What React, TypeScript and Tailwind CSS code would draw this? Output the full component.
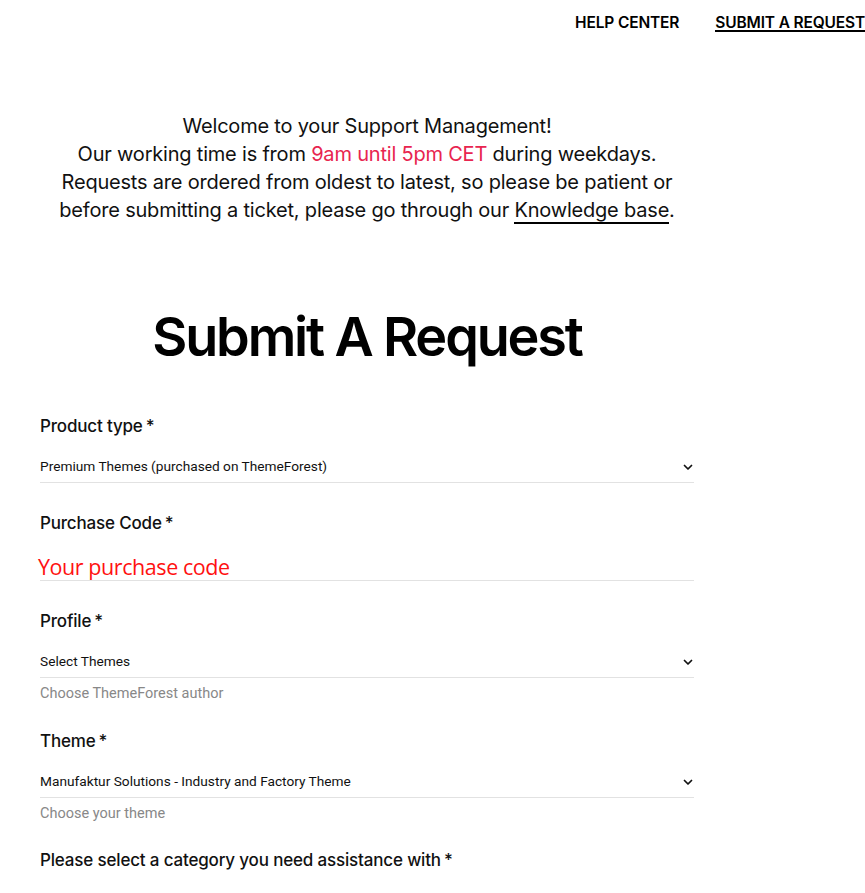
import React from 'react';

const Chevron = () => (
  <svg width="12" height="12" viewBox="0 0 24 24" fill="none" stroke="#111" strokeWidth="3.5" strokeLinecap="round" strokeLinejoin="round">
    <polyline points="5 9 12 16 19 9" />
  </svg>
);

function Label({ children }: { children: React.ReactNode }) {
  return (
    <div className="text-[17px] font-medium text-[#111] leading-6 [font-family:Inter,sans-serif] tracking-[-0.01em]">
      {children}
      <span className="ml-[3px]">*</span>
    </div>
  );
}

function SelectField({ value, help }: { value: string; help?: string }) {
  return (
    <div>
      <div className="mt-[13px] flex items-center justify-between border-b border-[#e2e2e2] h-[32px]">
        <span className="text-[13.7px] text-[#111] [font-family:Roboto,sans-serif]">{value}</span>
        <Chevron />
      </div>
      {help && (
        <div className="mt-[6px] text-[14.5px] leading-5 text-[#888] [font-family:Roboto,sans-serif]">{help}</div>
      )}
    </div>
  );
}

export default function App() {
  return (
    <div className="min-h-screen bg-white text-[#111] [font-family:Inter,sans-serif] overflow-hidden">
      <nav className="flex justify-end gap-[36px] pt-[15px] h-[40px] whitespace-nowrap">
        <a className="text-[15.5px] font-semibold tracking-[-0.01em] leading-[16px] text-black">HELP CENTER</a>
        <a className="text-[15.5px] font-semibold tracking-[-0.01em] leading-[16px] text-black border-b-2 border-black h-[17px]">
          SUBMIT A REQUEST
        </a>
      </nav>

      <div className="w-[654px] ml-[40px]">
        <p className="mt-[72px] text-center text-[20px] leading-[28px] tracking-[-0.01em] text-[#111]">
          Welcome to your Support Management!
          <br />
          Our working time is from <span className="text-[#e8254f]">9am until 5pm CET</span> during weekdays.
          <br />
          Requests are ordered from oldest to latest, so please be patient or
          <br />
          before submitting a ticket, please go through our{' '}
          <a className="border-b-2 border-black">Knowledge base</a>.
        </p>

        <h1 className="mt-[81px] text-center text-[54px] font-semibold tracking-[-0.04em] leading-[64px] text-black">
          Submit A Request
        </h1>

        <form className="mt-[45px]">
          <Label>Product type</Label>
          <SelectField value="Premium Themes (purchased on ThemeForest)" />

          <div className="mt-[28px]">
            <Label>Purchase Code</Label>
            <div className="mt-[14px] border-b border-[#e2e2e2] h-[32px] pt-[6px] flex items-center">
              <span className="text-[21.5px] text-[#f11] -ml-[2px] [font-family:'Open_Sans',sans-serif] tracking-[-0.02em]">
                Your purchase code
              </span>
            </div>
          </div>

          <div className="mt-[28px]">
            <Label>Profile</Label>
            <SelectField value="Select Themes" help="Choose ThemeForest author" />
          </div>

          <div className="mt-[25px]">
            <Label>Theme</Label>
            <SelectField value="Manufaktur Solutions - Industry and Factory Theme" help="Choose your theme" />
          </div>

          <div className="mt-[24px]">
            <Label>Please select a category you need assistance with</Label>
          </div>
        </form>
      </div>
    </div>
  );
}
